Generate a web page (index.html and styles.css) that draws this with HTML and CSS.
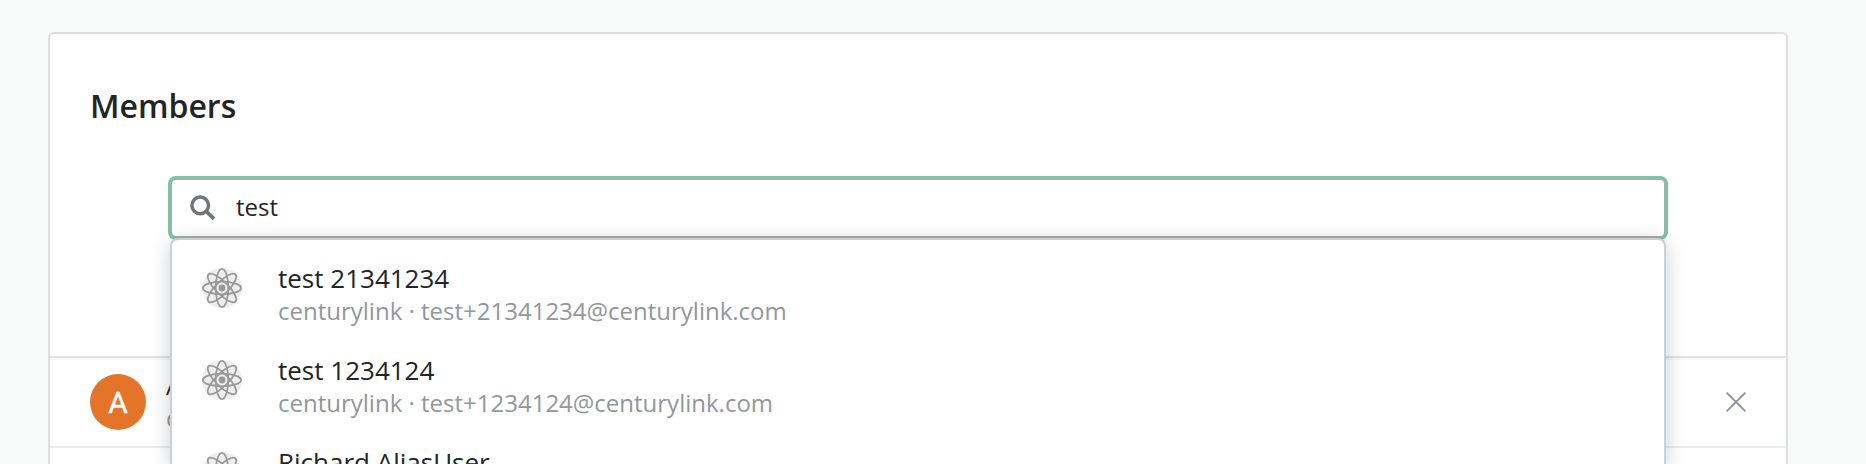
FILE: index.html
```html
<!DOCTYPE html>
<html lang="en">
<head>
<meta charset="utf-8">
<title>Members</title>
<link rel="stylesheet" href="styles.css">
</head>
<body>
<svg class="sprite" aria-hidden="true">
  <symbol id="atom" viewBox="-20 -20 40 40">
    <circle r="20" fill="#eeeeee"/>
    <g fill="none" stroke="#999999" stroke-width="1.8">
      <ellipse rx="19.1" ry="6.3"/>
      <ellipse rx="19.1" ry="6.3" transform="rotate(45)"/>
      <ellipse rx="19.1" ry="6.3" transform="rotate(90)"/>
      <ellipse rx="19.1" ry="6.3" transform="rotate(135)"/>
    </g>
    <circle r="3.4" fill="#999999"/>
  </symbol>
</svg>
<main class="card">
  <header class="card-head">
    <h1 class="title">Members</h1>
    <div class="search">
      <label class="field">
        <svg class="search-icon" viewBox="0 0 26 26"><circle cx="10.2" cy="10.4" r="8.3" fill="none" stroke="#6f757b" stroke-width="3.5"/><path d="M16 16.1L24 23.9" stroke="#6f757b" stroke-width="3.8"/></svg>
        <span class="query">test</span>
      </label>
      <ul class="menu">
        <li class="option">
          <svg class="atom"><use href="#atom"/></svg>
          <div><div class="name">test 21341234</div><div class="detail">centurylink · test+21341234@centurylink.com</div></div>
        </li>
        <li class="option">
          <svg class="atom"><use href="#atom"/></svg>
          <div><div class="name">test 1234124</div><div class="detail">centurylink · test+1234124@centurylink.com</div></div>
        </li>
        <li class="option">
          <svg class="atom"><use href="#atom"/></svg>
          <div><div class="name">Richard AliasUser</div></div>
        </li>
      </ul>
    </div>
  </header>
  <section class="members">
    <div class="member">
      <span class="avatar">A</span>
      <div class="member-text"><div class="member-name">A</div><div class="member-detail">c</div></div>
      <svg class="remove" viewBox="0 0 20 20"><path d="M.6 .6L19.4 19.4M19.4 .6L.6 19.4" stroke="#8b8f97" stroke-width="1.8"/></svg>
    </div>
  </section>
</main>
</body>
</html>
```
FILE: styles.css
```css
* { box-sizing: border-box; }
body {
  margin: 0;
  height: 464px;
  overflow: hidden;
  padding: 32px 78px 0 48px;
  background: #f8faf9;
  color: #222526;
  font-family: "Open Sans", "Noto Sans", sans-serif;
}
.sprite { position: absolute; width: 0; height: 0; }
.card {
  height: 432px;
  background: #fff;
  border: 2px solid #dfdfdf;
  border-bottom: 0;
  border-radius: 6px 6px 0 0;
}
.card-head {
  height: 324px;
  padding: 48px 120px 0;
  border-bottom: 2px solid #e1e1e1;
}
.title {
  margin: 0 0 0 -80px;
  height: 96px;
  font-size: 32px;
  line-height: 48px;
  font-weight: 600;
}
.search { position: relative; height: 60px; }
.field {
  display: flex;
  align-items: center;
  height: 60px;
  padding-left: 18px;
  border: 2px solid #aaaab0;
  border-radius: 6px;
  box-shadow: 0 0 0 2px #66cf9d;
  background: #fff;
}
.search-icon { width: 26px; height: 26px; }
.query { margin: 0 0 2px 20px; font-size: 24px; line-height: 36px; }
.menu {
  position: absolute;
  top: 60px;
  left: 0;
  right: 0;
  height: 226px;
  overflow: hidden;
  margin: 0;
  padding: 12px 0;
  list-style: none;
  background: #fff;
  border: 2px solid #cbd0d5;
  border-bottom: 0;
  border-radius: 8px 8px 0 0;
  box-shadow: 0 4px 20px rgba(0, 0, 0, .2);
}
.option {
  display: flex;
  height: 92px;
  padding: 10px 30px;
  white-space: nowrap;
}
.atom { width: 40px; height: 40px; margin: 6px 36px 0 0; }
.name { height: 33px; font-size: 26px; line-height: 32px; }
.detail { font-size: 24px; line-height: 32px; color: #92979b; }
.members { border-top: 2px solid #f7f7f7; }
.member {
  display: flex;
  align-items: center;
  height: 88px;
  padding: 0 40px 2px;
  border-bottom: 2px solid #e9ecef;
}
.avatar {
  width: 56px;
  height: 56px;
  border-radius: 50%;
  background: #e5742b;
  color: #fff;
  font: 400 30px/57px Roboto, sans-serif;
  -webkit-text-stroke: .4px #fff;
  text-align: center;
}
.member-text { flex: 1; margin-left: 20px; line-height: 32px; }
.member-name { font-size: 24px; }
.member-detail { font-size: 24px; color: #92979b; }
.remove { width: 20px; height: 20px; }
```
